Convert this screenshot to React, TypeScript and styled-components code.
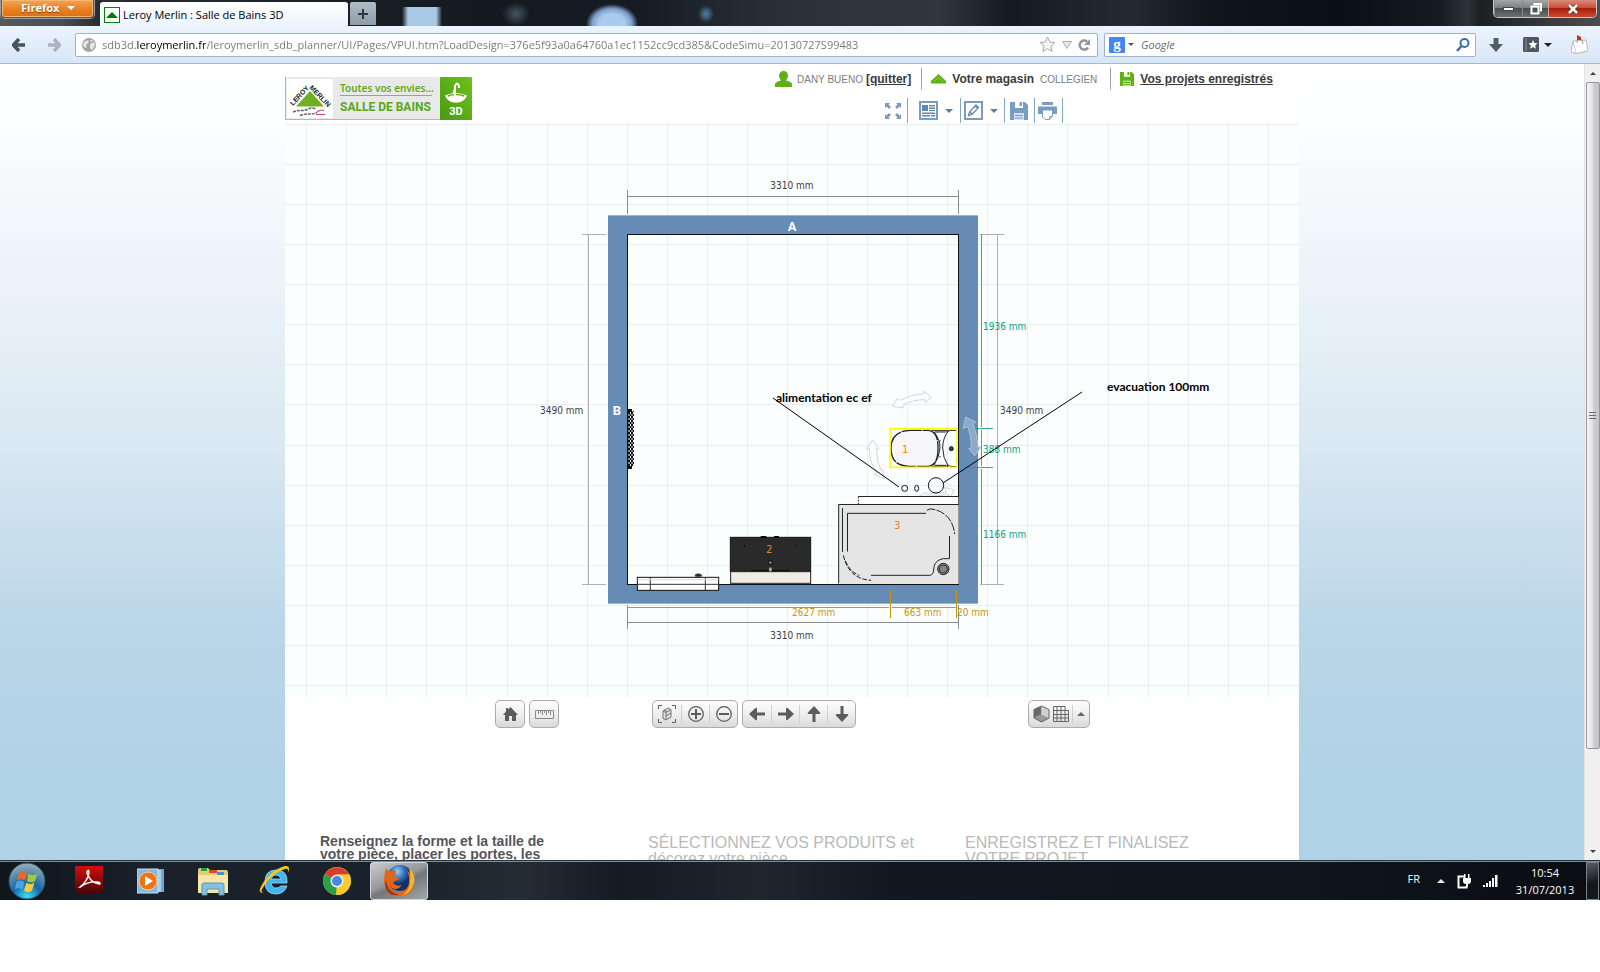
import React from "react";
import styled, { createGlobalStyle } from "styled-components";

const ui = `"Open Sans", "Noto Sans", sans-serif`;
const web = `"Liberation Sans", Arial, sans-serif`;
const planFont = `"DejaVu Sans Condensed", "DejaVu Sans", sans-serif`;

const Global = createGlobalStyle`
  * { box-sizing: border-box; }
  body { margin: 0; background: #fff; font-family: ${web}; }
  button { font: inherit; color: inherit; margin: 0; padding: 0; border: 0; background: none; cursor: pointer; }
  input { font: inherit; margin: 0; padding: 0; border: 0; outline: 0; background: none; min-width: 0; }
  svg { display: block; flex: none; }
`;

const Desktop = styled.div`
  display: flex;
  flex-direction: column;
  height: calc(100vh - 72px);
  min-height: 400px;
  overflow: hidden;
`;

/* ---------- window frame ---------- */
const TitleBar = styled.header`
  display: flex;
  align-items: flex-start;
  height: 26px;
  flex: none;
  padding: 0 3px 0 1px;
  background:
    radial-gradient(ellipse 8px 9px at 706px 14px, #4f87a8 0%, #4f87a800 100%),
    radial-gradient(ellipse 26px 20px at 612px 24px, #a9cbf0 50%, #7f9fcb 76%, #7f9fcb00 100%),
    radial-gradient(ellipse 14px 12px at 516px 14px, #46545e 0%, #46545e00 100%),
    linear-gradient(90deg, #a9c8e600 402px, #a9c8e6 408px, #a9c8e6 436px, #a9c8e600 442px) 0 7px no-repeat,
    linear-gradient(90deg, #55585d 0, #4b4e54 60px, #282c33 100px, #14181f 480px, #171c24 640px, #2c323b 800px, #30363f 940px, #141922 1010px, #242a32 1130px, #10141b 1210px, #0a0f18 1340px, #161b20 1440px, #2c3439 1468px, #1c2022 1480px, #4c4e50 1600px);
`;
const FirefoxButton = styled.button`
  display: flex;
  align-items: center;
  gap: 8px;
  height: 18px;
  width: 93px;
  padding: 0 0 1px 19px;
  border: 1px solid #8a4a14;
  border-top: 0;
  border-radius: 0 0 4px 4px;
  background: linear-gradient(#f4a650, #e88325 50%, #dc6f14);
  box-shadow: inset 0 0 0 1px #f6b774, 0 0 0 1px #9a9da2;
  color: #fff;
  font: 700 11px/16px ${ui};
  text-shadow: 0 1px 1px #8a3c00;
`;
const Tab = styled.button`
  display: flex;
  align-items: center;
  gap: 3px;
  width: 248px;
  height: 24px;
  margin: 2px 0 0 6px;
  padding: 1px 4px 0;
  border-radius: 3px 3px 0 0;
  background: linear-gradient(#fff, #ecf4fd);
  color: #000;
  font: 400 11px/24px ${ui};
  white-space: nowrap;
`;
const NewTab = styled.button`
  display: grid;
  place-items: center;
  width: 26px;
  height: 23px;
  margin: 2px 0 0 2px;
  border-radius: 2px 2px 0 0;
  background: linear-gradient(#b9c5d0, #94a3b0);
  opacity: 0.95;
`;
const Controls = styled.div`
  display: flex;
  margin-left: auto;
  height: 18px;
  border: 1px solid #c7cacc;
  border-top: 0;
  border-radius: 0 0 5px 5px;
  overflow: hidden;
`;
const Control = styled.button<{ $w: number; $close?: boolean }>`
  display: grid;
  place-items: center;
  width: ${(p) => p.$w}px;
  border-left: 1px solid ${(p) => (p.$close ? "#e9a08c" : "#85888a")};
  background: ${(p) =>
    p.$close
      ? "linear-gradient(#d98b7b, #c8513a 45%, #a91d0b 50%, #c94a31)"
      : "linear-gradient(#a5a7a9, #7c7f81 45%, #4b4e50 50%, #6c6f71)"};
`;

const NavBar = styled.nav`
  display: flex;
  align-items: center;
  height: 38px;
  flex: none;
  padding: 0 12px 0 10px;
  background: linear-gradient(#ecf4fd, #d8e6f6);
  border-bottom: 1px solid #9fb8d3;
`;
const IconButton = styled.button<{ $w: number; $ml?: number }>`
  display: flex;
  align-items: center;
  justify-content: center;
  gap: 5px;
  width: ${(p) => p.$w}px;
  height: 24px;
  margin-left: ${(p) => p.$ml ?? 0}px;
`;
const Field = styled.label<{ $grow?: boolean }>`
  display: flex;
  align-items: center;
  height: 24px;
  padding: 0 6px;
  border: 1px solid #9cb3cc;
  border-radius: 2px;
  background: #fff;
  ${(p) => (p.$grow ? "flex: 1; margin-left: 13px;" : "width: 372px; margin-left: 6px; padding: 0 4px;")}
`;
const Address = styled.input`
  flex: 1;
  height: 20px;
  margin-left: 6px;
  font: 400 11px/20px ${ui};
  color: transparent;
  background: linear-gradient(90deg, #757575 34px, #000 34px, #000 104px, #757575 104px);
  -webkit-background-clip: text;
  background-clip: text;
`;
const Search = styled.input`
  flex: 1;
  height: 20px;
  margin-left: 7px;
  font: italic 400 11px/20px ${ui};
  &::placeholder { color: #6b6b6b; opacity: 1; }
`;

/* ---------- web page ---------- */
const View = styled.div`
  display: flex;
  flex: 1;
  min-height: 0;
`;
const Page = styled.main`
  flex: 1;
  overflow: hidden;
  background: linear-gradient(#fff 0, #fdfeff 50px, #dbe9f3 370px, #bad6e8 560px, #b0d2e6 720px, #b0d2e6);
`;
const Column = styled.div`
  width: 100%;
  max-width: 1014px;
  margin: 0 auto;
  min-height: 100%;
  background: #fff;
`;
const PageHeader = styled.div`
  display: flex;
  height: 59px;
  padding-top: 4px;
`;
const HomeLink = styled.a`
  display: block;
  margin-top: 9px;
`;
const HeaderSide = styled.div`
  margin-left: 303px;
`;
const UserRow = styled.div`
  display: flex;
  align-items: center;
  height: 22px;
  font-size: 10px;
  color: #7b7d80;
  white-space: nowrap;
`;
const StrongLink = styled.a<{ $ml: number }>`
  color: #3a3a3c;
  font: 700 12px/14px ${web};
  margin-left: ${(p) => p.$ml}px;
`;
const StrongText = styled.span`
  color: #3a3a3c;
  font: 700 12px/14px ${web};
  margin: 0 6px;
`;
const UserName = styled.span`
  margin-left: 5px;
`;
const StoreName = styled.span`
  margin-right: 3px;
`;
const Rule = styled.span`
  width: 1px;
  height: 22px;
  margin: 0 9px 0 10px;
  background: linear-gradient(#a5948c, #b8a59b);
`;
const Tools = styled.div`
  display: flex;
  align-items: center;
  height: 25px;
  margin: 8px 0 0 110px;
`;
const Tool = styled.button<{ $pad: string }>`
  display: flex;
  align-items: center;
  height: 25px;
  gap: 7px;
  padding: ${(p) => p.$pad};
  border-right: 1px solid #83a9bf;
`;
const PlanSvg = styled.svg`
  width: 100%;
  height: auto;
  background: #fbfeff;
`;
const Commands = styled.div`
  display: flex;
  align-items: flex-start;
  padding: 3px 0 0 210px;
  height: 31px;
`;
const Group = styled.div<{ $ml: number }>`
  display: flex;
  align-items: center;
  height: 28px;
  margin-left: ${(p) => p.$ml}px;
  border: 1px solid #acacac;
  border-radius: 5px;
  background: linear-gradient(#fdfdfd, #ededed 55%, #d9d9d9);
`;
const Cmd = styled.button<{ $w?: number }>`
  display: flex;
  align-items: center;
  justify-content: center;
  gap: 3px;
  width: ${(p) => p.$w ?? 28}px;
  height: 18px;
  & + & { border-left: 1px solid #cfcfcf; }
`;
const Steps = styled.section`
  display: grid;
  grid-template-columns: 328px 317px 1fr;
  padding: 107px 0 0 35px;
`;
const Step = styled.h2<{ $active?: boolean }>`
  margin: 0;
  max-width: ${(p) => (p.$active ? 240 : 280)}px;
  color: ${(p) => (p.$active ? "#55565a" : "#b9b9b9")};
  font: ${(p) => (p.$active ? "700 14px/13px" : "400 16px/16px")} ${web};
`;

const ScrollBar = styled.div`
  display: flex;
  flex-direction: column;
  align-items: center;
  width: 16px;
  flex: none;
  background: #f0f0f0;
  border-left: 1px solid #e3e3e3;
`;
const ScrollArrow = styled.button`
  display: grid;
  place-items: center;
  width: 15px;
  height: 18px;
`;
const Thumb = styled.div`
  display: flex;
  flex-direction: column;
  align-items: center;
  justify-content: center;
  gap: 2px;
  width: 14px;
  flex: 0 1 667px;
  margin-bottom: auto;
  border: 1px solid #979797;
  border-radius: 2px;
  background: linear-gradient(90deg, #f5f5f5, #e4e4e6 45%, #cfcfd2 55%, #c4c4c8);
  i { width: 7px; height: 1px; background: #6a6a6a; }
`;

/* ---------- taskbar ---------- */
const TaskBar = styled.footer`
  display: flex;
  align-items: center;
  height: 40px;
  flex: none;
  padding: 0 1px 0 8px;
  border-top: 1px solid #26323b;
  box-shadow: inset 0 1px 0 #7d8e96;
  background: linear-gradient(90deg, #10151c, #1a212b 160px, #19212c 400px, #242c35 520px, #151a23 620px, #1f262e 760px, #111620 900px, #10151d 1300px, #0a0d12);
  color: #fff;
  font: 400 11px/17px ${ui};
`;
const Launcher = styled.button<{ $w: number; $ml?: number; $active?: boolean }>`
  display: grid;
  place-items: center;
  width: ${(p) => p.$w}px;
  height: 38px;
  margin-left: ${(p) => p.$ml ?? 0}px;
  ${(p) =>
    p.$active &&
    `border: 1px solid #d5d8da; border-radius: 3px;
     background: linear-gradient(155deg, #c9cbcd, #96999c 45%, #74777a 55%, #a4a7a9);`}
`;
const Tray = styled.div`
  display: flex;
  align-items: center;
  gap: 12px;
  margin-left: auto;
`;
const Clock = styled.time`
  width: 64px;
  margin-left: 3px;
  text-align: center;
`;
const Language = styled.button`
  margin: 0 5px 4px 0;
`;
const ShowDesktop = styled.button`
  width: 13px;
  height: 38px;
  margin-left: 9px;
  border: 1px solid #7b8084;
  background: linear-gradient(160deg, #5b5f63, #15181c 55%);
`;

const Caret = ({ w = 8, color = "#5580a6", up = false }: { w?: number; color?: string; up?: boolean }) => (
  <svg width={w} height={w / 2} viewBox="0 0 8 4">
    <path d={up ? "M0 4h8L4 0z" : "M0 0h8L4 4z"} fill={color} />
  </svg>
);

const Logo = () => (
  <svg width="187" height="43" viewBox="0 0 187 43" role="img" aria-label="Leroy Merlin, Salle de Bains 3D">
    <defs>
      <linearGradient id="logoGreen" x1="0" y1="1" x2="1" y2="0">
        <stop offset="0" stopColor="#4a9a10" />
        <stop offset="1" stopColor="#6cc21c" />
      </linearGradient>
    </defs>
    <rect width="187" height="43" fill="#e9e9e9" />
    <path d="M0 42.5H187M.5 0V43" stroke="#b5b5b5" />
    <rect x="2" y="2" width="46" height="39" fill="#fff" />
    <path d="M25 14 39 29.500H11z" fill="#72ae22" />
    <g fontFamily={web} fontWeight="700" fontSize="7" fill="#222">
      <text transform="translate(8 29) rotate(-47)">LEROY</text>
      <text transform="translate(24 11) rotate(46)">MERLIN</text>
    </g>
    <path d="M8 35q5-2 8-1.500t7-1.500 8 0M15 38.500q6-2 9-1.500t8-1.500" fill="none" stroke="#666" strokeWidth="1.500" strokeDasharray="3 1" />
    <path d="M32 35q4-3 7-1.500M31 37.500h9" fill="none" stroke="#d2485a" strokeWidth="1.200" />
    <text x="55" y="15" fontFamily={`"Noto Sans", sans-serif`} fontWeight="600" fontSize="10" fill="#5cab1c">Toutes vos envies...</text>
    <path d="M55 18.500H147" stroke="#7fc04c" />
    <text x="55" y="34" fontFamily="Roboto, sans-serif" fontWeight="700" fontSize="12" fill="#55a818">SALLE DE BAINS</text>
    <rect x="155" width="32" height="43" rx="1" fill="url(#logoGreen)" />
    <path d="M160 18.500q11-5 22 0q-2 6-9 7h-4q-7-1-9-7z" fill="#fff" />
    <path d="M163 19q8-3 16 0" stroke="#5eb016" fill="none" strokeWidth="1.500" />
    <path d="M170 19V9q2-5 4 0v2M168 17l2-5" stroke="#fff" fill="none" strokeWidth="2" />
    <text x="171" y="38" textAnchor="middle" fontFamily="Roboto, sans-serif" fontWeight="700" fontSize="11" fill="#fff">3D</text>
  </svg>
);

const DimText = styled.text<{ $c?: string }>`
  font: 400 10px ${planFont};
  fill: ${(p) => p.$c ?? "#404040"};
`;
const WallName = styled.text`
  font: 700 13px Roboto, sans-serif;
  fill: #fff;
`;
const Note = styled.text`
  font: 700 12px Lato, sans-serif;
  fill: #000;
`;
const PartNumber = styled.text`
  font: 400 10px "DejaVu Sans", sans-serif;
  fill: #f0821e;
`;

const cols = [306, 346, 386, 426, 466, 507, 547, 587, 627, 667, 707, 747, 787, 827, 867, 907, 947, 987, 1027, 1067, 1108, 1148, 1188, 1228, 1268];
const rows = [124, 164, 204, 244, 284, 324, 364, 404, 445, 485, 525, 565, 605, 645, 685];
const green = "#16a078";
const gold = "#c8960f";

const Plan = () => (
  <PlanSvg viewBox="285 123 1014 574" role="img" aria-label="Plan de la salle de bains">
    <defs>
      <pattern id="grille" width="3" height="4" patternUnits="userSpaceOnUse">
        <rect width="3" height="4" fill="#111" />
        <rect x="0" y="0" width="1" height="2" fill="#fff" />
        <rect x="1.500" y="2" width="1" height="2" fill="#fff" />
      </pattern>
    </defs>
    <g stroke="#e9eef0">
      {cols.map((x) => <path key={x} d={`M${x + 0.5} 123V697`} />)}
      {rows.map((y) => <path key={y} d={`M285 ${y + 0.5}H1299`} />)}
    </g>
    <path fillRule="evenodd" fill="#668cb6" d="M608 215H978V603H608zM627 234H959V585H627z" />
    <path d="M608 215.500H978M608 603.500H978" stroke="#9bb4cf" />
    <rect x="627.500" y="234.500" width="331" height="350" fill="none" stroke="#111" />

    <g stroke="#8c8c8c" fill="none">
      <path d="M627.500 196.500H958.500M627.500 190V214M958.500 190V214" />
      <path d="M627.500 622.500H958.500M627.500 605V629M958.500 605V629" />
      <path d="M588.500 234V585M582 234.500H606M582 584.500H606" stroke="#b0b0b0" />
      <path d="M997.500 234V585M980 234.500H1004M980 584.500H1004" stroke="#b0b0b0" />
    </g>
    <path d="M981.500 234V427M981.500 430V466M981.500 469V584M964 428.500H993M964 467.500H993" stroke={green} opacity=".85" />
    <path d="M627 607.500H889M892 607.500H956M890.500 590V618M956.500 590V618" stroke={gold} />

    <DimText x="792" y="189" textAnchor="middle">3310 mm</DimText>
    <DimText x="792" y="639" textAnchor="middle">3310 mm</DimText>
    <DimText x="540" y="414">3490 mm</DimText>
    <DimText x="1000" y="414">3490 mm</DimText>
    <DimText x="983" y="330" $c={green}>1936 mm</DimText>
    <DimText x="983" y="453" $c={green}>388 mm</DimText>
    <DimText x="983" y="538" $c={green}>1166 mm</DimText>
    <DimText x="792" y="616" $c={gold}>2627 mm</DimText>
    <DimText x="904" y="616" $c={gold}>663 mm</DimText>
    <DimText x="957" y="616" $c={gold}>20 mm</DimText>
    <WallName x="792" y="231" textAnchor="middle">A</WallName>
    <WallName x="617" y="415" textAnchor="middle">B</WallName>

    <path d="M628 409h4v2h2v55h-2v3h-4z" fill="url(#grille)" />
    <path d="M628 409h4v3h-4zM628 466h4v3h-4z" fill="#111" />

    <g transform="translate(520 390) scale(.33333)">
      <rect x="631" y="442" width="241" height="102" fill="#2a2a2a" stroke="#111" strokeWidth="3" />
      <rect x="632" y="545" width="240" height="35" fill="#f0ebe4" stroke="#222" strokeWidth="3" />
      <path d="M722 441h17M762 441h15M672 468h3M828 468h3" stroke="#080808" strokeWidth="6" />
      <path d="M693 542h116" stroke="#080808" strokeWidth="3" />
      <circle cx="751" cy="518" r="6" fill="#777" stroke="#050505" strokeWidth="3" />
      <path d="M747 533h8v11h-8z" fill="#aaa" />
      <rect x="352" y="562" width="244" height="39" fill="#fdfdff" stroke="#111" strokeWidth="3" />
      <path d="M391 562v39M556 562v39M352 583h244" stroke="#333" strokeWidth="3" />
      <path d="M353 569h242" stroke="#ddd" strokeWidth="3" />
      <path d="M526 554q9-5 18 0v5h-18zM533 555v9" fill="#333" stroke="#222" strokeWidth="2" />
    </g>

    <g transform="translate(820 370) scale(.33333)">
      <g fill="#fcfdfe" stroke="#d3d5d8" strokeWidth="3">
        <path d="M218 109 233 84 240 91Q275 72 312 71V63L334 82 316 98 314 89Q275 90 247 106L250 114z" />
        <path d="M158 210 176 236H170Q168 272 184 302L188 298 192 326 162 312 172 308Q148 280 148 236H140z" />
        <path d="M296 380 318 366 319 372Q355 372 380 366L372 352 403 360 390 382 384 373Q350 380 320 378z" />
      </g>
      <path d="M437 141 467 156 460 163Q472 195 474 232H482L464 258 446 235H454Q454 198 444 171L430 175z" fill="#8daacb" stroke="#a9bfd8" strokeWidth="3" />

      <path d="M213 234C213 195 240 182 270 181H325Q355 184 354 234Q355 285 325 289H268C235 288 213 275 213 234z" fill="#f6f6f8" stroke="#222" strokeWidth="4" strokeDasharray="60 3" />
      <path d="M335 182h50M345 186h34M335 289h50M345 286h34M342 186Q361 210 360 234T342 286M385 183Q368 205 368 234T385 288M380 184Q392 180 408 181M380 286Q392 290 408 290" fill="none" stroke="#222" strokeWidth="3" />
      <circle cx="394" cy="236" r="6" fill="#444" stroke="#111" strokeWidth="3" />
      <path d="M360 210v4M360 258v4M409 268v3" stroke="#222" strokeWidth="3" />
      <rect x="210" y="176" width="201" height="116" fill="none" stroke="#ff0" strokeWidth="5" />

      <g fill="none" stroke="#111" strokeWidth="3">
        <circle cx="254" cy="355" r="9" />
        <ellipse cx="290" cy="355" rx="6" ry="9" />
        <circle cx="348" cy="346" r="23" />
      </g>

      <rect x="56" y="404" width="360" height="238" fill="#e5e5e6" />
      <rect x="115" y="380" width="300" height="23" fill="#fdffff" />
      <g fill="none" stroke="#222" strokeWidth="3">
        <path d="M56 640V403.500H416M115 379.500H416" />
        <path d="M115 380V403" strokeDasharray="5 4" />
        <path d="M67.500 414V546M82.500 545V430H318" />
        <path d="M321 421Q330 413 345 419C380 428 400 455 404 492" strokeDasharray="26 4" />
        <path d="M388.500 498V566M388 566H370C350 570 342 580 341 600Q340 616 328 616H153" />
        <path d="M70 556C80 600 105 628 153 631M76 572Q90 606 118 616" strokeDasharray="14 5" />
      </g>
      <circle cx="370" cy="597" r="17" fill="#8a8780" stroke="#222" strokeWidth="3" />
      <circle cx="370" cy="597" r="12" fill="none" stroke="#333" strokeWidth="3" />
    </g>

    <PartNumber x="902" y="453">1</PartNumber>
    <PartNumber x="766" y="553">2</PartNumber>
    <PartNumber x="894" y="529">3</PartNumber>
    <path d="M773 398 899 487M1082 392 943 483" stroke="#000" />
    <Note x="776" y="402">alimentation ec ef</Note>
    <Note x="1107" y="391">evacuation 100mm</Note>
  </PlanSvg>
);

const blue = "#7a9cc0";
const grey = "#5c5c5c";

const Arrow = ({ turn }: { turn: number }) => (
  <svg width="18" height="18" viewBox="0 0 18 18">
    <path transform={`rotate(${turn} 9 9)`} d="M1 9 8 2.500 9 3.500V7.500H17V10.500H9V14.500L8 15.500z" fill={grey} />
  </svg>
);

const Floppy = ({ size, color, hole }: { size: number; color: string; hole: string }) => (
  <svg width={size} height={size} viewBox="0 0 18 18">
    <path d="M0 0h5v6h8V0h2l3 3v15H0z" fill={color} />
    <path d="M9.500 0h2.500v4H9.500z" fill={color} />
    <path d="M4 11h10v7H4z" fill={hole} />
    <path d="M5 13h8v1H5zM5 15.500h8v1H5z" fill={color} />
  </svg>
);

export default function App() {
  return (
    <>
      <Global />
      <Desktop>
        <TitleBar>
          <FirefoxButton>Firefox <Caret color="#fff" /></FirefoxButton>
          <Tab>
            <svg width="16" height="16" viewBox="0 0 16 16">
              <rect x=".5" y=".5" width="15" height="15" fill="#fff" stroke="#008200" />
              <path d="M2 11 8 5l6 6z" fill="#007a00" />
            </svg>
            Leroy Merlin : Salle de Bains 3D
          </Tab>
          <NewTab aria-label="Nouvel onglet">
            <svg width="10" height="10" viewBox="0 0 10 10"><path d="M5 0V10M0 5H10" stroke="#2e3a44" strokeWidth="2" /></svg>
          </NewTab>
          <Controls>
            <Control $w={28} aria-label="Réduire">
              <svg width="11" height="4" viewBox="0 0 11 4"><rect x=".5" y=".5" width="10" height="3" fill="#fff" stroke="#444" /></svg>
            </Control>
            <Control $w={26} aria-label="Restaurer">
              <svg width="12" height="12" viewBox="0 0 12 12"><path d="M3.500 1H11v7.500M1.500 3.500h7v7h-7z" fill="none" stroke="#fff" strokeWidth="2" /></svg>
            </Control>
            <Control $w={48} $close aria-label="Fermer">
              <svg width="12" height="10" viewBox="0 0 12 10"><path d="M2 1l8 8M10 1L2 9" stroke="#5b2a26" strokeWidth="4" /><path d="M2 1l8 8M10 1L2 9" stroke="#fff" strokeWidth="2.500" /></svg>
            </Control>
          </Controls>
        </TitleBar>

        <NavBar>
          <IconButton $w={16} aria-label="Page précédente">
            <svg width="13" height="14" viewBox="0 0 13 14"><path d="M7 1 1.500 7 7 13M2 7H13" fill="none" stroke="#46525f" strokeWidth="3.500" /></svg>
          </IconButton>
          <IconButton $w={16} $ml={20} aria-label="Page suivante">
            <svg width="13" height="14" viewBox="0 0 13 14"><path d="M6 1l5.500 6L6 13M11 7H0" fill="none" stroke="#a9b4c0" strokeWidth="3.500" /></svg>
          </IconButton>
          <Field $grow>
            <svg width="14" height="14" viewBox="0 0 14 14">
              <circle cx="7" cy="7" r="7" fill="#a3a3a3" />
              <path d="M2 4l4-2 1 2-3 3 1 2-2 1-2-3zM8 6l4-2 1 3-2 4-2 1-1-3zM8 2l2 0 1 1-2 1z" fill="#e6e6e6" />
            </svg>
            <Address
              aria-label="Adresse"
              spellCheck={false}
              defaultValue="sdb3d.leroymerlin.fr/leroymerlin_sdb_planner/UI/Pages/VPUI.htm?LoadDesign=376e5f93a0a64760a1ec1152cc9cd385&CodeSimu=20130727S99483"
            />
            <IconButton $w={18} type="button" aria-label="Marquer cette page">
              <svg width="17" height="17" viewBox="0 0 17 17"><path d="M8.500 1l2.200 5 5.300.5-4 3.600 1.200 5.400-4.700-2.900-4.700 2.900L5 10.100 1 6.500 6.300 6z" fill="#f6f6f6" stroke="#a9a9a9" /></svg>
            </IconButton>
            <IconButton $w={10} $ml={6} type="button" aria-label="Historique">
              <svg width="10" height="8" viewBox="0 0 10 8"><path d="M.5.5h9L5 7.500z" fill="#e3e6ea" stroke="#a7afb8" /></svg>
            </IconButton>
            <IconButton $w={13} $ml={6} type="button" aria-label="Actualiser">
              <svg width="13" height="12" viewBox="0 0 13 12"><path d="M10 8.500A4.500 4.500 0 1 1 9 2.500" fill="none" stroke="#8c96a1" strokeWidth="2.500" /><path d="M12 0v6H6z" fill="#8c96a1" /></svg>
            </IconButton>
          </Field>
          <Field>
            <svg width="16" height="16" viewBox="0 0 16 16">
              <rect width="16" height="16" rx="1" fill="#4285f4" />
              <text x="8" y="12" textAnchor="middle" fontFamily="Liberation Serif, serif" fontSize="15" fontWeight="700" fill="#fff">g</text>
            </svg>
            <IconButton $w={6} $ml={3} type="button" aria-label="Moteurs"><Caret w={6} color="#555" /></IconButton>
            <Search placeholder="Google" aria-label="Recherche" />
            <IconButton $w={16} type="button" aria-label="Rechercher">
              <svg width="14" height="14" viewBox="0 0 14 14"><circle cx="8.500" cy="5" r="4" fill="none" stroke="#3a6ea5" strokeWidth="2" /><path d="M5.500 8 1 13" stroke="#3a6ea5" strokeWidth="2.500" /></svg>
            </IconButton>
          </Field>
          <IconButton $w={16} $ml={12} aria-label="Téléchargements">
            <svg width="14" height="14" viewBox="0 0 14 14"><path d="M4.500 0h5v6H14L7 14 0 6h4.500z" fill="#505c69" /></svg>
          </IconButton>
          <IconButton $w={30} $ml={18} aria-label="Marque-pages">
            <svg width="16" height="15" viewBox="0 0 16 15"><rect width="16" height="15" rx="1.500" fill="#4c5763" /><path d="M3 1v13" stroke="#8a95a2" /><path d="M10 3l1.300 3 3.200.2-2.400 2.200.8 3.300L10 10l-2.900 1.700.8-3.300-2.400-2.200L8.700 6z" fill="#fff" /></svg>
            <Caret color="#222" />
          </IconButton>
          <IconButton $w={18} $ml={18} aria-label="Panier">
            <svg width="17" height="19" viewBox="0 0 17 19"><path d="M2 6l13-1 2 11-12 2.500L0 17z" fill="#fff" stroke="#b9b9b9" /><path d="M2 6l3 12" stroke="#ccc" /><path d="M6 8q0-6 5-3l1 4" fill="none" stroke="#999" /><path d="M6 0l4 2v3H6z" fill="#b83a22" /></svg>
          </IconButton>
        </NavBar>

        <View>
          <Page>
            <Column>
              <PageHeader>
                <HomeLink href="#accueil"><Logo /></HomeLink>
                <HeaderSide>
                  <UserRow>
                    <svg width="17" height="16" viewBox="0 0 17 16"><path d="M0 16v-3q0-2 6-3.500Q4 7 4 4.500 4.500 0 8.500 0T13 4.500Q13 7 11 9.500 17 11 17 13v3z" fill="#5cb30f" /></svg>
                    <UserName>DANY BUENO</UserName>
                    <StrongLink $ml={3} href="#quitter">[quitter]</StrongLink>
                    <Rule />
                    <svg width="15" height="10" viewBox="0 0 15 10"><path d="M7.500 0 15 7v2.500H0V7z" fill="#5cb30f" /><path d="M3 7.500 7.500 3.500 12 7.500" stroke="#8fd04e" fill="none" /></svg>
                    <StrongText>Votre magasin</StrongText>
                    <StoreName>COLLEGIEN</StoreName>
                    <Rule />
                    <Floppy size={14} color="#5cb30f" hole="#b8e08c" />
                    <StrongLink $ml={6} href="#projets">Vos projets enregistrés</StrongLink>
                  </UserRow>
                  <Tools>
                    <Tool $pad="0 6px 0 0" aria-label="Plein écran">
                      <svg width="16" height="16" viewBox="0 0 16 16"><path d="M0 0h5L3.500 1.500 6 4 4 6 1.500 3.500 0 5zM16 0v5l-1.500-1.500L12 6l-2-2 2.500-2.500L11 0zM0 16v-5l1.500 1.500L4 10l2 2-2.500 2.500L5 16zM16 16h-5l1.500-1.500L10 12l2-2 2.500 2.500L16 11z" fill={blue} /></svg>
                    </Tool>
                    <Tool $pad="0 7px 0 11px" aria-label="Affichage">
                      <svg width="19" height="19" viewBox="0 0 19 19"><rect x="1" y="1" width="17" height="17" fill="#fff" stroke={blue} strokeWidth="2" /><path d="M3 4h6v6H3zM10 4h6v1.500h-6zM10 6.500h6V8h-6zM10 9h6v1h-6zM3 11.500h13V13H3zM3 14h8v1.500H3zM12 14h4v1.500h-4z" fill="#5f87b2" /></svg>
                      <Caret />
                    </Tool>
                    <Tool $pad="0 6px 0 3px" aria-label="Modifier">
                      <svg width="19" height="19" viewBox="0 0 19 19"><rect x="1" y="1" width="17" height="17" fill="#fff" stroke={blue} strokeWidth="2" /><path d="M4.500 14.500 5.500 11 12 4l2.500 2.500-6.500 7zM6 11l2.500 2.500M11 5l2.500 2.500" fill="none" stroke="#6389b0" strokeWidth="1.300" /></svg>
                      <Caret />
                    </Tool>
                    <Tool $pad="0 6px 0 5px" aria-label="Enregistrer"><Floppy size={18} color={blue} hole="#d7e2ee" /></Tool>
                    <Tool $pad="0 5px 0 3px" aria-label="Imprimer">
                      <svg width="19" height="18" viewBox="0 0 19 18"><path d="M4 0h11v3H4zM0 4.500h19V12h-4V8H4v4H0z" fill={blue} /><path d="M4.500 8h10v6.500L11.500 17.500H7L4.500 15z" fill="#fff" stroke={blue} /><path d="M11.500 17.500v-3h3" fill="none" stroke={blue} /></svg>
                    </Tool>
                  </Tools>
                </HeaderSide>
              </PageHeader>

              <Plan />

              <Commands>
                <Group $ml={0}>
                  <Cmd aria-label="Vue initiale"><svg width="15" height="14" viewBox="0 0 15 14"><path d="M7.500 0 15 8h-2v6H9V9H6v5H2V8H0L3 4.500V1h2v1.500z" fill={grey} /></svg></Cmd>
                </Group>
                <Group $ml={4}>
                  <Cmd aria-label="Mesures"><svg width="19" height="9" viewBox="0 0 19 9"><path d="M.5.5h18v8H.5zM3.500 1v3M5.500 1v2M7.500 1v4M9.500 1v2M11.500 1v4M13.500 1v2M15.500 1v4" fill="none" stroke="#8a8a8a" /></svg></Cmd>
                </Group>
                <Group $ml={93}>
                  <Cmd aria-label="Recentrer"><svg width="18" height="18" viewBox="0 0 18 18"><path d="M.5 4V.5H4M14 .5h3.500V4M17.500 14v3.500H14M4 17.500H.5V14" fill="none" stroke={grey} /><path d="M5 6l5-3 3 1.500V12l-5 3-3-1.500zM5 6l3 1.500V15M8 7.500l5-3M6 5l3 1.500M8 11l5-3" fill="#ddd" stroke="#777" /></svg></Cmd>
                  <Cmd aria-label="Zoom avant"><svg width="16" height="16" viewBox="0 0 16 16"><circle cx="8" cy="8" r="7.300" fill="none" stroke={grey} strokeWidth="1.300" /><path d="M3 8h10M8 3v10" stroke={grey} strokeWidth="2" /></svg></Cmd>
                  <Cmd aria-label="Zoom arrière"><svg width="16" height="16" viewBox="0 0 16 16"><circle cx="8" cy="8" r="7.300" fill="none" stroke={grey} strokeWidth="1.300" /><path d="M3 8h10" stroke={grey} strokeWidth="2" /></svg></Cmd>
                </Group>
                <Group $ml={4}>
                  <Cmd aria-label="Gauche"><Arrow turn={0} /></Cmd>
                  <Cmd aria-label="Droite"><Arrow turn={180} /></Cmd>
                  <Cmd aria-label="Haut"><Arrow turn={90} /></Cmd>
                  <Cmd aria-label="Bas"><Arrow turn={270} /></Cmd>
                </Group>
                <Group $ml={172}>
                  <Cmd $w={43} aria-label="Rendu">
                    <svg width="17" height="18" viewBox="0 0 17 18"><path d="M1 4.500 8.500 1V9.500L1 13z" fill="#6a6a6a" /><path d="M8.500 1 16 4.500V13L8.500 9.500z" fill="#d0d0d0" /><path d="M8.500 9.500 16 13l-7.500 4L1 13z" fill="#989898" /><path d="M1 4.500 8.500 1 16 4.500V13l-7.500 4L1 13z" fill="none" stroke="#666" /></svg>
                    <svg width="16" height="16" viewBox="0 0 16 16"><path d="M.5.500h11.500v4h3.500v11H.5zM4 .5v15M8 .5v15M12 4v12M.5 4.500h15M.5 8.500h15M.5 12h15" fill="none" stroke="#666" /></svg>
                  </Cmd>
                  <Cmd $w={17} aria-label="Options"><Caret up color="#666" /></Cmd>
                </Group>
              </Commands>

              <Steps>
                <Step $active>Renseignez la forme et la taille de votre pièce, placer les portes, les</Step>
                <Step>SÉLECTIONNEZ VOS PRODUITS et décorez votre pièce</Step>
                <Step>ENREGISTREZ ET FINALISEZ VOTRE PROJET</Step>
              </Steps>
            </Column>
          </Page>
          <ScrollBar>
            <ScrollArrow aria-label="Défiler vers le haut"><Caret up color="#404040" w={6} /></ScrollArrow>
            <Thumb><i /><i /><i /></Thumb>
            <ScrollArrow aria-label="Défiler vers le bas"><Caret color="#404040" w={6} /></ScrollArrow>
          </ScrollBar>
        </View>

        <TaskBar>
          <Launcher $w={38} aria-label="Démarrer">
            <svg width="38" height="38" viewBox="0 0 38 38">
              <defs>
                <radialGradient id="orb" cx=".5" cy=".95" r=".9">
                  <stop offset="0" stopColor="#3fe0ff" /><stop offset=".45" stopColor="#1667a4" /><stop offset="1" stopColor="#8fa9b8" />
                </radialGradient>
              </defs>
              <circle cx="19" cy="19" r="18" fill="url(#orb)" stroke="#2f4a5c" />
              <path d="M11 11q4-3 8 0l-2 7.500q-4-3-8 0z" fill="#f0642a" />
              <path d="M20.500 11.500q4 3 9 0l-2.500 7.500q-4 3-8 0z" fill="#9ccb3b" />
              <path d="M8.500 20q4-3 8 0l-2 7.500q-4-3-8 0z" fill="#4ba3e6" />
              <path d="M18.500 20.500q4 3 8 0L24 28.500q-4 3-8 0z" fill="#fbcb3c" />
            </svg>
          </Launcher>
          <Launcher $w={86} aria-label="Adobe Reader">
            <svg width="28" height="30" viewBox="0 0 28 30">
              <defs><linearGradient id="pdf" x2="0" y2="1"><stop offset="0" stopColor="#d40d0d" /><stop offset="1" stopColor="#4a0505" /></linearGradient></defs>
              <rect width="28" height="27" fill="url(#pdf)" />
              <path d="M5 21q7-5 9-14 0-4-1.500-2t1 5q3 7 11 8 2-1-2-2-9-1-17 5z" fill="none" stroke="#fff" strokeWidth="1.400" />
            </svg>
          </Launcher>
          <Launcher $w={36} aria-label="Lecteur multimédia">
            <svg width="27" height="26" viewBox="0 0 27 26"><path d="M5 1h22v23H5z" fill="#6fa9d2" /><path d="M2 2h22v22H2z" fill="#a7cfe9" /><path d="M0 1h21v24H0z" fill="#86b9dc" stroke="#c9e3f4" /><circle cx="11" cy="13" r="9" fill="#ef7215" stroke="#fbd0a4" /><path d="M8 8l8 5-8 5z" fill="#fff" /></svg>
          </Launcher>
          <Launcher $w={90} aria-label="Explorateur">
            <svg width="32" height="30" viewBox="0 0 32 30"><path d="M1 4q0-2 2-2h8l2 2h16q2 0 2 2v21H1z" fill="#e6cd74" /><path d="M4 2h6v3H4z" fill="#26a83c" /><path d="M12 4h8v3h-8z" fill="#d84a36" /><path d="M20 6h7v3h-7z" fill="#3598dd" /><path d="M1 9h30v18H1z" fill="#f6e6a8" /><path d="M5 29V19q0-2 2-2h18q2 0 2 2v10h-5v-6H10v6z" fill="#86bfe0" stroke="#5c93bd" /></svg>
          </Launcher>
          <Launcher $w={34} aria-label="Internet Explorer">
            <svg width="32" height="34" viewBox="0 0 32 34"><path d="M28 19H12q1 5 5 5 3 0 5-2h6q-3 8-11 8Q6 30 6 18T17 6q12 0 11 13zM12 15h10q-1-4-5-4t-5 4z" fill="#43b5ea" stroke="#9ddcf7" strokeWidth=".8" /><path d="M5 29Q-4 30 6 16 16 4 26 2q6-1 3 7 1-5-3-4Q16 8 8 18-1 29 5 29z" fill="#f7c51e" /></svg>
          </Launcher>
          <Launcher $w={66} $ml={12} aria-label="Chrome">
            <svg width="28" height="28" viewBox="0 0 28 28"><circle cx="14" cy="14" r="14" fill="#fbcb2e" /><path d="M14 14 1.900 7A14 14 0 0 1 26.100 7.500H14z" fill="#dc3b2c" /><path d="M14 14 1.900 7A14 14 0 0 0 13 28L20 17z" fill="#2c9f48" /><path d="M14 14V7.500H26.100A14 14 0 0 1 13 28z" fill="#fbcb2e" /><circle cx="14" cy="14" r="6.500" fill="#f2f2f2" /><circle cx="14" cy="14" r="5" fill="#4a88d9" /></svg>
          </Launcher>
          <Launcher $w={58} $active aria-label="Firefox">
            <svg width="32" height="34" viewBox="0 0 32 34">
              <defs><radialGradient id="globe" cx=".4" cy=".25"><stop offset="0" stopColor="#9fd0f2" /><stop offset=".5" stopColor="#3a78c2" /><stop offset="1" stopColor="#12306e" /></radialGradient></defs>
              <circle cx="17" cy="14" r="13" fill="url(#globe)" />
              <path d="M3 4q1 3 4 3 3-1 6 0 0 3-3 5l6 2q0 2-4 3l-2 2q4 4 8 2 1 1-2 3-6 3-9-2 3 8 11 6 9-3 8-13 0-5-2-8 7 4 7 12-1 13-14 13T1 18Q1 10 3 4z" fill="#e2651a" />
              <path d="M26 4q7 7 5 15-3 11-13 13 9-5 9-14 1-7-1-14z" fill="#f8b62b" />
              <path d="M3 16q1 12 13 15-12 2-14-10z" fill="#a8320f" />
            </svg>
          </Launcher>
          <Tray>
            <Language>FR</Language>
            <Caret up color="#e8e8e8" />
            <svg width="14" height="16" viewBox="0 0 14 16"><path d="M7 3.500H1.500v11h8V13" fill="none" stroke="#fff" strokeWidth="2" /><path d="M6 5h8v3q0 3-3 3v3H9v-3q-3 0-3-3zM7 1h1.500v4H7zM11 1h1.500v4H11z" fill="#fff" /></svg>
            <svg width="15" height="12" viewBox="0 0 15 12"><path d="M0 10h2v2H0zM3 8h2v4H3zM6 6h2v6H6zM9 3h2v9H9zM12 0h2.500v12H12z" fill="#fff" /></svg>
            <Clock dateTime="2013-07-31T10:54">10:54<br />31/07/2013</Clock>
          </Tray>
          <ShowDesktop aria-label="Afficher le bureau" />
        </TaskBar>
      </Desktop>
    </>
  );
}
